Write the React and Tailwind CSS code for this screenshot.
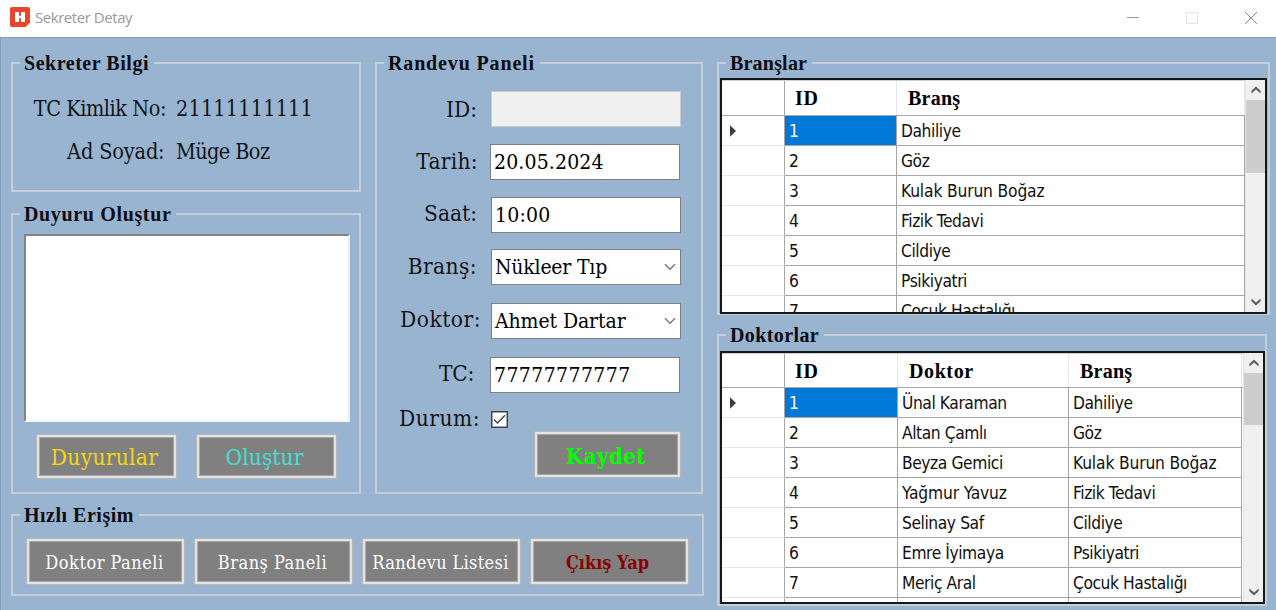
import React from "react";

function Group({ title, titleClass = "", className = "", children }) {
  return (
    <fieldset className={`min-w-0 border-2 border-[#c4cfda] ${className}`}>
      <legend
        className={`ml-[7px] pl-1 pr-[5px] font-['Liberation_Serif',serif] text-[20px] font-bold leading-6 whitespace-nowrap text-[#0b0d10] ${titleClass}`}
      >
        {title}
      </legend>
      {children}
    </fieldset>
  );
}

function Button({ className = "", children }) {
  return (
    <button
      className={`flex shrink-0 items-center justify-center border border-[#b6b6b6] bg-[#808080] font-['DejaVu_Serif_Condensed','DejaVu_Serif',serif] whitespace-nowrap shadow-[inset_0_0_0_2px_#e3e3e3,inset_0_0_0_3px_#a9a9a9] ${className}`}
    >
      {children}
    </button>
  );
}

function InfoRow({ label, labelClass, value, valueClass, className = "" }) {
  return (
    <div className={`flex text-[21.5px] leading-8 whitespace-nowrap ${className}`}>
      <div className="flex w-[163px] shrink-0 justify-end">
        <span className={labelClass}>{label}</span>
      </div>
      <span className={valueClass}>{value}</span>
    </div>
  );
}

const fields = [
  { label: "ID:", row: "mt-4", lw: "w-[100px] leading-9", gap: "ml-[14px]", box: "border-[#c9cccf] bg-[#f0f0f0]", value: "", text: "" },
  { label: "Tarih:", row: "mt-[17px]", lw: "w-[101px] leading-[34px] tracking-[0.3px]", gap: "ml-[12px]", box: "border-[#7d8083] bg-white", value: "20.05.2024", text: "tracking-[0.15px]" },
  { label: "Saat:", row: "mt-[17px]", lw: "w-[100px] leading-8", gap: "ml-[14px]", box: "border-[#7d8083] bg-white", value: "10:00", text: "tracking-[0.2px]" },
  { label: "Branş:", row: "mt-4", lw: "w-[100px] leading-[34px] tracking-[0.4px]", gap: "ml-[14px]", box: "border-[#7d8083] bg-white", value: "Nükleer Tıp", text: "tracking-[-0.2px]", select: true },
  { label: "Doktor:", row: "mt-[18px]", lw: "w-[104px] leading-8 tracking-[0.5px]", gap: "ml-[10px]", box: "border-[#7d8083] bg-white", value: "Ahmet Dartar", text: "tracking-[-0.1px]", select: true },
  { label: "TC:", row: "mt-[18px]", lw: "w-[97px] leading-8 tracking-[-0.3px]", gap: "ml-[16px]", box: "border-[#7d8083] bg-white", value: "77777777777", text: "tracking-[0.4px]" },
];

function Field({ label, row, lw, gap, box, value, text, select }) {
  return (
    <div className={`flex h-9 ${row}`}>
      <div className={`flex shrink-0 justify-end text-[22.5px] whitespace-nowrap ${lw}`}>{label}</div>
      <div className={`flex h-9 w-[190px] shrink-0 items-center justify-between border pr-1 pl-[3px] text-[21px] text-black ${gap} ${box}`}>
        <span className={`pt-0.5 whitespace-nowrap ${text}`}>{value}</span>
        {select && (
          <svg width="12" height="8" viewBox="0 0 12 8" fill="none" stroke="#7a7a7a" strokeWidth="1.5">
            <path d="M1 1.2 6 6.2 11 1.2" />
          </svg>
        )}
      </div>
    </div>
  );
}

function Chevron({ down }) {
  return (
    <svg width="10" height="8" viewBox="0 0 10 8" fill="#606060">
      {down ? <path d="M0.4 0.4 5 4.4 9.6 0.4V3.2L5 7.6 0.4 3.2Z" /> : <path d="M0.4 7.6 5 3.6 9.6 7.6V4.8L5 0.4 0.4 4.8Z" />}
    </svg>
  );
}

function ScrollBar({ thumb }) {
  return (
    <div className="flex w-5 shrink-0 flex-col items-center border-l border-[#e3e3e3] bg-[#f0f0f0]">
      <div className="flex h-5 shrink-0 items-center justify-center">
        <Chevron />
      </div>
      <div className={`w-full shrink-0 bg-[#cdcdcd] ${thumb}`} />
      <div className="grow" />
      <div className="flex h-5 shrink-0 items-center justify-center">
        <Chevron down />
      </div>
    </div>
  );
}

function DataGrid({ columns, rows, thumb, headClass, className }) {
  return (
    <div className={`flex overflow-hidden border-2 border-[#15181b] bg-white ${className}`}>
      <div className="min-w-0 grow overflow-hidden">
        <div className={`flex border-t border-b border-t-[#d0d0d0] border-b-[#a6a6a6] font-['Liberation_Serif',serif] text-[20px] font-bold text-black ${headClass}`}>
          <div className="w-[63px] shrink-0 border-r border-[#a6a6a6]" />
          {columns.map((c) => (
            <div key={c.title} className={`flex shrink-0 items-center border-r border-[#e6e6e6] ${c.width}`}>
              <span className={c.head}>{c.title}</span>
            </div>
          ))}
        </div>
        {rows.map((r, i) => (
          <div key={i} className="flex h-[30px] font-['DejaVu_Sans_Condensed','DejaVu_Sans',sans-serif] text-[17.25px] text-[#101010]">
            <div className="flex w-[63px] shrink-0 items-center border-r border-b border-r-[#a6a6a6] border-b-[#e6e6e6] pl-[7px]">
              {i === 0 && (
                <svg width="8" height="12" viewBox="0 0 8 12" fill="#3c3c3c">
                  <path d="M1 0.3 7 6 1 11.7Z" />
                </svg>
              )}
            </div>
            {r.map((v, j) => (
              <div
                key={j}
                className={`flex shrink-0 items-center border-r border-b border-[#a6a6a6] pt-0.5 pl-1 whitespace-nowrap ${columns[j].width} ${i === 0 && j === 0 ? "bg-[#0078d7] text-white" : ""}`}
              >
                <span className={v === "Kulak Burun Boğaz" || v === "Yağmur Yavuz" ? "tracking-[-0.15px]" : "tracking-[-0.42px]"}>{v}</span>
              </div>
            ))}
          </div>
        ))}
      </div>
      <ScrollBar thumb={thumb} />
    </div>
  );
}

const branches = ["Dahiliye", "Göz", "Kulak Burun Boğaz", "Fizik Tedavi", "Cildiye", "Psikiyatri", "Çocuk Hastalığı"];
const doctors = ["Ünal Karaman", "Altan Çamlı", "Beyza Gemici", "Yağmur Yavuz", "Selinay Saf", "Emre İyimaya", "Meriç Aral"];

export default function App() {
  return (
    <div className="flex h-[610px] w-[1276px] flex-col overflow-hidden bg-[#99b4d1]">
      <header className="flex h-[37px] shrink-0 items-center bg-white">
        <svg className="mt-[-3px] ml-[10px]" width="20" height="20" viewBox="0 0 20 20">
          <path d="M2 0H18Q20 0 20 2V15.5L15.5 20H2Q0 20 0 18V2Q0 0 2 0Z" fill="#e8452a" />
          <path d="M5 5H9V8.7H11V5H15V15H11V11.3H9V15H5Z" fill="#fff" />
        </svg>
        <span className="mt-[-2px] ml-[5px] font-['Open_Sans',sans-serif] text-[15px] tracking-[-0.45px] text-[#999]">Sekreter Detay</span>
        <div className="mt-[-1px] mr-[19px] ml-auto flex items-center gap-[47px]">
          <svg width="12" height="12" viewBox="0 0 12 12" stroke="#999">
            <path d="M0 5.5H12" />
          </svg>
          <svg width="12" height="12" viewBox="0 0 12 12" fill="none" stroke="#e4e4e4">
            <path d="M.5 .5H11.5V11.5H.5Z" />
          </svg>
          <svg width="12" height="12" viewBox="0 0 12 12" stroke="#8a8a8a">
            <path d="M0 0 12 12M12 0 0 12" />
          </svg>
        </div>
      </header>
      <main className="flex grow items-start border-t border-l border-t-[#7f9cb8] border-l-[#86a0bb] pt-[13px] pl-[10px] font-['DejaVu_Serif_Condensed','DejaVu_Serif',serif] text-[#101418]">
        <div className="w-[693px] shrink-0">
          <div className="flex gap-[14px]">
            <div className="w-[350px] shrink-0">
              <Group title="Sekreter Bilgi" titleClass="tracking-[0.53px]" className="h-[141px]">
                <InfoRow
                  className="mt-[18px]"
                  label="TC Kimlik No:"
                  labelClass="mr-[10px] tracking-[-0.45px]"
                  value="21111111111"
                  valueClass="tracking-[0.15px]"
                />
                <InfoRow className="mt-[11px]" label="Ad Soyad:" labelClass="mr-[11.5px] tracking-[-0.15px]" value="Müge Boz" valueClass="tracking-[-0.6px]" />
              </Group>
              <Group title="Duyuru Oluştur" titleClass="tracking-[0.65px]" className="mt-[10px] h-[292px]">
                <div className="mt-2 ml-[11px] h-[188px] w-[326px] border-2 border-t-[#85827f] border-r-[#eeeeee] border-b-[#f6f6f6] border-l-[#85827f] bg-white" />
                <div className="mt-3 ml-[23px] flex gap-[19px]">
                  <Button className="h-[45px] w-[141px] pt-0.5 pr-1 text-[22.5px] tracking-[0.3px] text-[#f5d410]">Duyurular</Button>
                  <Button className="h-[45px] w-[141px] pt-0.5 pr-1 text-[22.5px] tracking-[0.1px] text-[#40e0d0]">Oluştur</Button>
                </div>
              </Group>
            </div>
            <Group title="Randevu Paneli" titleClass="tracking-[0.85px]" className="h-[443px] w-[328px]">
              {fields.map((f) => (
                <Field key={f.label} {...f} />
              ))}
              <div className="mt-[9px] flex h-[29px]">
                <span className="flex w-[103px] shrink-0 justify-end text-[22.5px] leading-8 tracking-[0.5px]">Durum:</span>
                <svg className="mt-[9px] ml-[11px]" width="17" height="17" viewBox="0 0 17 17" fill="none">
                  <path d="M.75 .75H16.25V16.25H.75Z" fill="#fff" stroke="#444" strokeWidth="1.5" />
                  <path d="M3 8.5 6.5 12 14 4.2" stroke="#444" strokeWidth="1.4" />
                </svg>
              </div>
              <Button className="ml-[157px] h-[47px] w-[147px] pt-[3px] pr-[3px] text-[22px] font-bold tracking-[0.45px] text-[#00ff00]">Kaydet</Button>
            </Group>
          </div>
          <Group title="Hızlı Erişim" titleClass="tracking-[0.5px]" className="mt-[9px] h-[93px]">
            <div className="mt-[11px] ml-[13px] flex gap-[9px] text-[18px]">
              <Button className="h-[47px] w-[159px] pt-0.5 pr-0.5 tracking-[0.5px] text-white">Doktor Paneli</Button>
              <Button className="h-[47px] w-[159px] pt-0.5 pr-0.5 tracking-[0.5px] text-white">Branş Paneli</Button>
              <Button className="h-[47px] w-[159px] pt-0.5 pr-0.5 tracking-[0.35px] text-white">Randevu Listesi</Button>
              <Button className="h-[47px] w-[159px] pt-0.5 pr-1 font-bold text-[#8b0000]">Çıkış Yap</Button>
            </div>
          </Group>
        </div>
        <div className="ml-[13px] shrink-0">
          <Group title="Branşlar" titleClass="tracking-[0.2px]" className="h-[264px] w-[553px]">
            <DataGrid
              className="mt-[3px] ml-px h-[236px] w-[547px]"
              headClass="h-9"
              thumb="h-[73px]"
              columns={[
                { title: "ID", width: "w-28", head: "ml-[10px] tracking-[0.8px]" },
                { title: "Branş", width: "w-[348px]", head: "ml-[11px] tracking-[0.25px]" },
              ]}
              rows={branches.map((b, i) => [i + 1, b])}
            />
          </Group>
          <Group title="Doktorlar" titleClass="tracking-[0.4px]" className="mt-2 h-[283px] w-[550px]">
            <DataGrid
              className="mt-1 ml-px h-[253px] w-[545px]"
              headClass="h-[35px]"
              thumb="h-[52px]"
              columns={[
                { title: "ID", width: "w-[113px]", head: "ml-[10px] tracking-[0.8px]" },
                { title: "Doktor", width: "w-[171px]", head: "ml-[11px] tracking-[0.6px]" },
                { title: "Branş", width: "w-[173px]", head: "ml-[11px] tracking-[0.25px]" },
              ]}
              rows={[...doctors.map((d, i) => [i + 1, d, branches[i]]), ["", "", ""]]}
            />
          </Group>
        </div>
      </main>
    </div>
  );
}
